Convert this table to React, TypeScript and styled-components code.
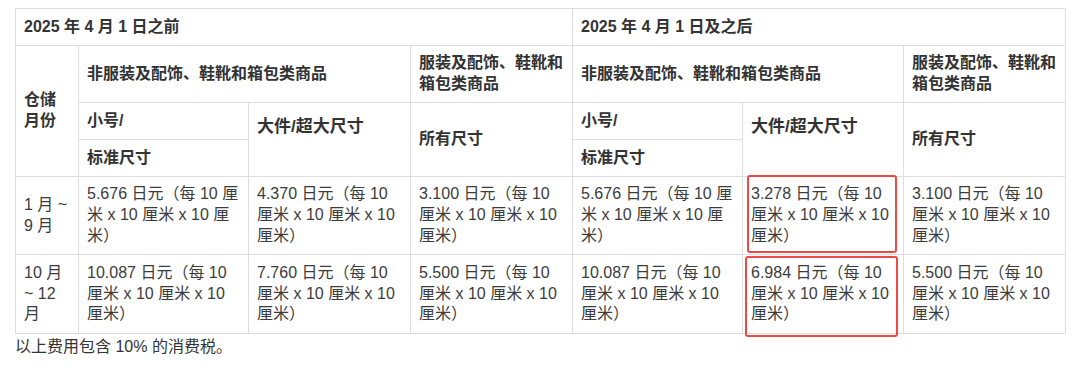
import styled, { createGlobalStyle, css } from 'styled-components';

const GlobalStyle = createGlobalStyle`
  body {
    margin: 0;
    background: #fff;
    font-family: "Liberation Sans", "Noto Sans CJK SC", sans-serif;
    color: #333;
    text-spacing-trim: space-all;
  }
`;

type Mark = { top: number; right: number; bottom: number; left: number };

const nonApparel = '非服装及配饰、鞋靴和箱包类商品';
const apparel = '服装及配饰、鞋靴和箱包类商品';

const rows = [
  {
    month: '1 月 ~ 9 月',
    prices: ['5.676', '4.370', '3.100', '5.676', '3.278', '3.100'],
    mark: { top: -2, right: 6, bottom: 1, left: 4 },
  },
  {
    month: '10 月 ~ 12 月',
    prices: ['10.087', '7.760', '5.500', '10.087', '6.984', '5.500'],
    mark: { top: 1, right: 5, bottom: -4, left: 2 },
  },
];

const widths = [63, 170, 162, 162, 170, 161, 162];

export default function App() {
  return (
    <Page>
      <GlobalStyle />
      <Table>
        <colgroup>
          {widths.map((w, i) => (
            <col key={i} style={{ width: w }} />
          ))}
        </colgroup>
        <thead>
          <tr>
            <Head colSpan={4}>2025 年 4 月 1 日之前</Head>
            <Head colSpan={3}>2025 年 4 月 1 日及之后</Head>
          </tr>
          <tr>
            <Head rowSpan={4}>仓储月份</Head>
            <Head colSpan={2}>{nonApparel}</Head>
            <Head>{apparel}</Head>
            <Head colSpan={2}>{nonApparel}</Head>
            <Head>{apparel}</Head>
          </tr>
          <tr>
            <Head>小号/</Head>
            <Head rowSpan={2} $big>大件/超大尺寸</Head>
            <Head rowSpan={2}>所有尺寸</Head>
            <Head>小号/</Head>
            <Head rowSpan={2} $big>大件/超大尺寸</Head>
            <Head rowSpan={2}>所有尺寸</Head>
          </tr>
          <tr>
            <Head>标准尺寸</Head>
            <Head>标准尺寸</Head>
          </tr>
        </thead>
        <tbody>
          {rows.map((r) => (
            <tr key={r.month}>
              <Cell>{r.month}</Cell>
              {r.prices.map((p, i) => (
                <Cell key={i} $mark={i === 4 ? r.mark : undefined}>
                  {p} 日元（每 10 厘米 x 10 厘米 x 10 厘米）
                </Cell>
              ))}
            </tr>
          ))}
        </tbody>
      </Table>
      <Note>以上费用包含 10% 的消费税。</Note>
    </Page>
  );
}

const Page = styled.div`
  padding: 8px 0 0 15px;
`;

const Table = styled.table`
  width: 1050px;
  table-layout: fixed;
  border-collapse: collapse;
  font-size: 16px;
  line-height: 20.8px;
`;

const cellBase = css`
  border: 1px solid #dedede;
  padding: 7.5px 8px;
  text-align: left;
  vertical-align: middle;
`;

const Head = styled.th<{ $big?: boolean }>`
  ${cellBase};
  font-weight: bold;
  color: #333;

  ${({ $big }) =>
    $big &&
    css`
      font-size: 17px;
      vertical-align: top;
      padding-top: 14px;
    `}
`;

const Cell = styled.td<{ $mark?: Mark }>`
  ${cellBase};
  position: relative;
  color: #3c3c3c;

  ${({ $mark }) =>
    $mark &&
    css`
      &::after {
        content: '';
        position: absolute;
        top: ${$mark.top}px;
        right: ${$mark.right}px;
        bottom: ${$mark.bottom}px;
        left: ${$mark.left}px;
        border: 2px solid #ee4a43;
        border-radius: 3px;
        pointer-events: none;
      }
    `}
`;

const Note = styled.p`
  margin: 3px 0 0;
  font-size: 16px;
  line-height: 20.8px;
  color: #333;
`;
